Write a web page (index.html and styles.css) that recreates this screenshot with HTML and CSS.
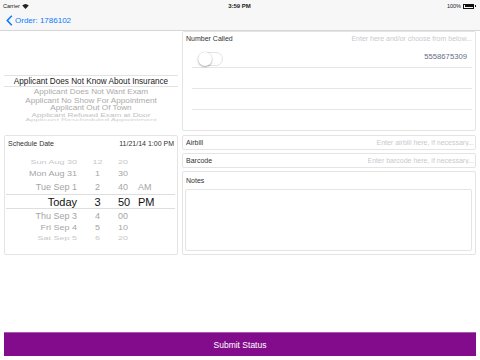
FILE: index.html
```html
<!DOCTYPE html>
<html>
<head>
<meta charset="utf-8">
<link rel="stylesheet" href="styles.css">
</head>
<body>
<header class="topbar">
  <div class="status">
    <div class="status-left">Carrier
      <svg class="wifi" width="7" height="5" viewBox="0 0 14 10"><path d="M7 10 L0.5 3.2 A9.5 9.5 0 0 1 13.5 3.2 Z" fill="#222"/></svg>
    </div>
    <div class="status-time">3:59 PM</div>
    <div class="status-right">100%
      <span class="battery"><span class="battery-fill"></span></span><span class="battery-tip"></span>
    </div>
  </div>
  <div class="nav">
    <svg class="chev" width="7" height="11" viewBox="0 0 7 11"><path d="M5.8 0.8 L1.3 5.5 L5.8 10.2" fill="none" stroke="#0a7aff" stroke-width="1.6"/></svg>
    <span class="nav-title">Order: 1786102</span>
  </div>
</header>

<main class="main">
  <section class="reason-picker">
    <div class="rp-space"></div>
    <div class="rp-row rp-sel"><span>Applicant Does Not Know About Insurance</span></div>
    <div class="rp-row rp-1"><span>Applicant Does Not Want Exam</span></div>
    <div class="rp-row rp-2"><span>Applicant No Show For Appointment</span></div>
    <div class="rp-row rp-3"><span>Applicant Out Of Town</span></div>
    <div class="rp-row rp-4"><span>Applicant Refused Exam at Door</span></div>
    <div class="rp-row rp-5"><span>Applicant Rescheduled Appointment</span></div>
  </section>

  <section class="card number-card">
    <div class="field-head">
      <span class="label">Number Called</span>
      <span class="placeholder">Enter here and/or choose from below...</span>
    </div>
    <div class="num-row num-first">
      <span class="toggle"><span class="knob"></span></span>
      <span class="num">5558675309</span>
    </div>
    <div class="num-row num-empty"></div>
    <div class="num-row num-empty"></div>
  </section>

  <section class="card schedule-card">
    <div class="field-head sched-head">
      <span class="label">Schedule Date</span>
      <span class="sched-value">11/21/14 1:00 PM</span>
    </div>
    <div class="dp">
      <div class="dp-row far s-a"><span class="c1">Sun Aug 30</span><span class="c2">12</span><span class="c3">20</span><span class="c4"></span></div>
      <div class="dp-row mid s-b"><span class="c1">Mon Aug 31</span><span class="c2">1</span><span class="c3">30</span><span class="c4"></span></div>
      <div class="dp-row near s-c"><span class="c1">Tue Sep 1</span><span class="c2">2</span><span class="c3">40</span><span class="c4">AM</span></div>
      <div class="dp-row sel"><span class="c1">Today</span><span class="c2">3</span><span class="c3">50</span><span class="c4">PM</span></div>
      <div class="dp-row near s-d"><span class="c1">Thu Sep 3</span><span class="c2">4</span><span class="c3">00</span><span class="c4"></span></div>
      <div class="dp-row mid s-e"><span class="c1">Fri Sep 4</span><span class="c2">5</span><span class="c3">10</span><span class="c4"></span></div>
      <div class="dp-row far s-f"><span class="c1">Sat Sep 5</span><span class="c2">6</span><span class="c3">20</span><span class="c4"></span></div>
    </div>
  </section>

  <section class="right-col">
    <div class="card line-field">
      <span class="label">Airbill</span>
      <span class="placeholder">Enter airbill here, if necessary...</span>
    </div>
    <div class="card line-field">
      <span class="label">Barcode</span>
      <span class="placeholder">Enter barcode here, if necessary...</span>
    </div>
    <div class="card notes-card">
      <span class="label notes-label">Notes</span>
      <div class="notes-box"></div>
    </div>
  </section>
</main>

<footer class="footer">
  <button class="submit">Submit Status</button>
</footer>
</body>
</html>
```

FILE: styles.css
```css
* { box-sizing: border-box; }
html, body { margin: 0; padding: 0; }
body {
  width: 480px;
  height: 360px;
  display: flex;
  flex-direction: column;
  background: #ffffff;
  font-family: "Liberation Sans", Arial, sans-serif;
  color: #222;
  overflow: hidden;
}

/* top bar */
.topbar {
  height: 31px;
  background: #f7f7f7;
  border-bottom: 1px solid #d6d6d6;
}
.status {
  height: 12px;
  display: grid;
  grid-template-columns: 1fr auto 1fr;
  align-items: center;
  font-size: 5.5px;
  padding: 0 4px 0 3px;
}
.status-left { display: flex; align-items: center; gap: 2px; color: #222; }
.status-time { font-weight: bold; font-size: 6px; }
.status-right { display: flex; justify-content: flex-end; align-items: center; gap: 1px; }
.battery {
  display: inline-block;
  width: 11px; height: 5px;
  border: 0.5px solid #111;
  padding: 0.5px;
  margin-left: 1px;
}
.battery-fill { display: block; width: 100%; height: 100%; background: #111; }
.battery-tip { display: inline-block; width: 1px; height: 2px; background: #111; }
.nav {
  height: 18px;
  display: flex;
  align-items: center;
  padding-left: 6px;
  gap: 2px;
  color: #0a7aff;
  padding-bottom: 1px;
}
.chev { display: block; }
.nav-title { font-size: 8px; }

/* main grid */
.main {
  display: grid;
  grid-template-columns: 174px 294px;
  grid-template-rows: 100px 120px;
  column-gap: 4px;
  row-gap: 4px;
  padding: 0 4px;
}
.card {
  background: #fff;
  border: 1px solid #e4e4e4;
  border-radius: 2px;
}
.label { font-size: 7px; color: #333; white-space: nowrap; }
.placeholder {
  font-size: 7px;
  color: #c9c9ce;
  white-space: nowrap;
  overflow: hidden;
  text-overflow: ellipsis;
}

/* reason picker */
.reason-picker {
  display: flex;
  flex-direction: column;
  align-items: stretch;
  overflow: hidden;
}
.rp-space { height: 44px; flex: none; }
.rp-row {
  flex: none;
  display: flex;
  justify-content: center;
  align-items: center;
  font-size: 8.2px;
  white-space: nowrap;
  color: #ababab;
}
.rp-row span { display: block; }
.rp-sel {
  height: 12px;
  color: #222;
  border-top: 1px solid #e2e2e2;
  border-bottom: 1px solid #e2e2e2;
}
.rp-1 { height: 9px; }
.rp-1 span { transform: scaleY(0.95); }
.rp-2 { height: 8px; }
.rp-2 span { transform: scaleY(0.88); }
.rp-3 { height: 8px; }
.rp-3 span { transform: scaleY(0.78); }
.rp-4 { height: 6px; color: #c0c0c0; }
.rp-4 span { transform: scaleY(0.6); }
.rp-5 { height: 4px; color: #d2d2d2; overflow: hidden; }
.rp-5 span { transform: scaleY(0.4); }

/* number called */
.number-card { display: flex; flex-direction: column; }
.field-head {
  height: 12px;
  display: flex;
  justify-content: space-between;
  align-items: center;
  padding: 0 3px 0 3px;
  gap: 6px;
  flex: none;
}
.num-row {
  flex: none;
  height: 21px;
  margin: 0 3px 0 9px;
  border-bottom: 1px solid #e6e6e6;
  display: flex;
  align-items: center;
  justify-content: space-between;
  padding: 0 5px 0 6px;
}
.num-first { height: 24px; padding-top: 7px; padding-bottom: 1px; }
.num-empty { height: 21px; }
.toggle {
  width: 25px; height: 14px;
  border-radius: 7px;
  border: 1px solid #e3e3e3;
  background: #fff;
  position: relative;
  display: inline-block;
}
.knob {
  position: absolute;
  left: -1px; top: -1px;
  width: 14px; height: 14px;
  border-radius: 50%;
  background: #fff;
  box-shadow: 0 1px 2px rgba(0,0,0,0.3), 0 0 0 0.5px rgba(0,0,0,0.08);
}
.num { font-size: 7.7px; color: #5f6e86; margin-top: -4px; }

/* schedule */
.schedule-card { display: flex; flex-direction: column; }
.sched-head { height: 14px; padding: 0 3px 0 3px; }
.sched-value { font-size: 7px; color: #333; }
.dp {
  margin-top: 6px;
  display: flex;
  flex-direction: column;
}
.dp-row {
  display: grid;
  grid-template-columns: 72px 41px 20px 1fr;
  align-items: center;
  font-size: 9px;
  color: #a5a5a5;
  white-space: nowrap;
}
.dp-row .c1 { text-align: right; }
.dp-row .c2 { text-align: center; }
.dp-row .c3, .dp-row .c4 { text-align: left; }
.dp-row.far { color: #c8c8c8; }
.s-a { height: 11px; }
.s-a span { transform: scaleY(0.5); display: block; }
.s-b { height: 13px; }
.s-b span { transform: scaleY(0.82); display: block; }
.s-c { height: 14px; }
.s-c span { transform: scaleY(0.96); display: block; }
.dp-row.sel {
  height: 15px;
  font-size: 11px;
  color: #111;
  border-top: 1px solid #dedede;
  border-bottom: 1px solid #dedede;
  margin: 0 2px 0 1px;
  grid-template-columns: 71px 41px 20px 1fr;
}
.s-d { height: 14px; }
.s-d span { transform: scaleY(0.96); display: block; }
.s-e { height: 10px; }
.s-e span { transform: scaleY(0.8); display: block; }
.s-f { height: 8px; overflow: hidden; }
.s-f span { transform: scaleY(0.5); display: block; }

/* right column */
.right-col {
  display: flex;
  flex-direction: column;
  gap: 3px;
}
.line-field {
  height: 15px;
  flex: none;
  display: flex;
  align-items: center;
  justify-content: space-between;
  padding: 0 1px 0 3px;
  gap: 8px;
}
.notes-card {
  flex: 1;
  display: flex;
  flex-direction: column;
  padding: 4px 3px 3px 2px;
}
.notes-label { padding-left: 1px; line-height: 9px; }
.notes-box {
  flex: 1;
  margin-top: 4px;
  border: 1px solid #e4e4e4;
  border-radius: 2px;
}

/* footer */
.footer {
  margin-top: auto;
  padding: 0 4px 4px;
}
.submit {
  display: block;
  width: 100%;
  height: 24px;
  border: none;
  border-top: 1px solid #a65cab;
  background: #820c8b;
  color: #fff;
  font-family: "Liberation Sans", Arial, sans-serif;
  font-size: 8.5px;
  padding: 0;
}
```
